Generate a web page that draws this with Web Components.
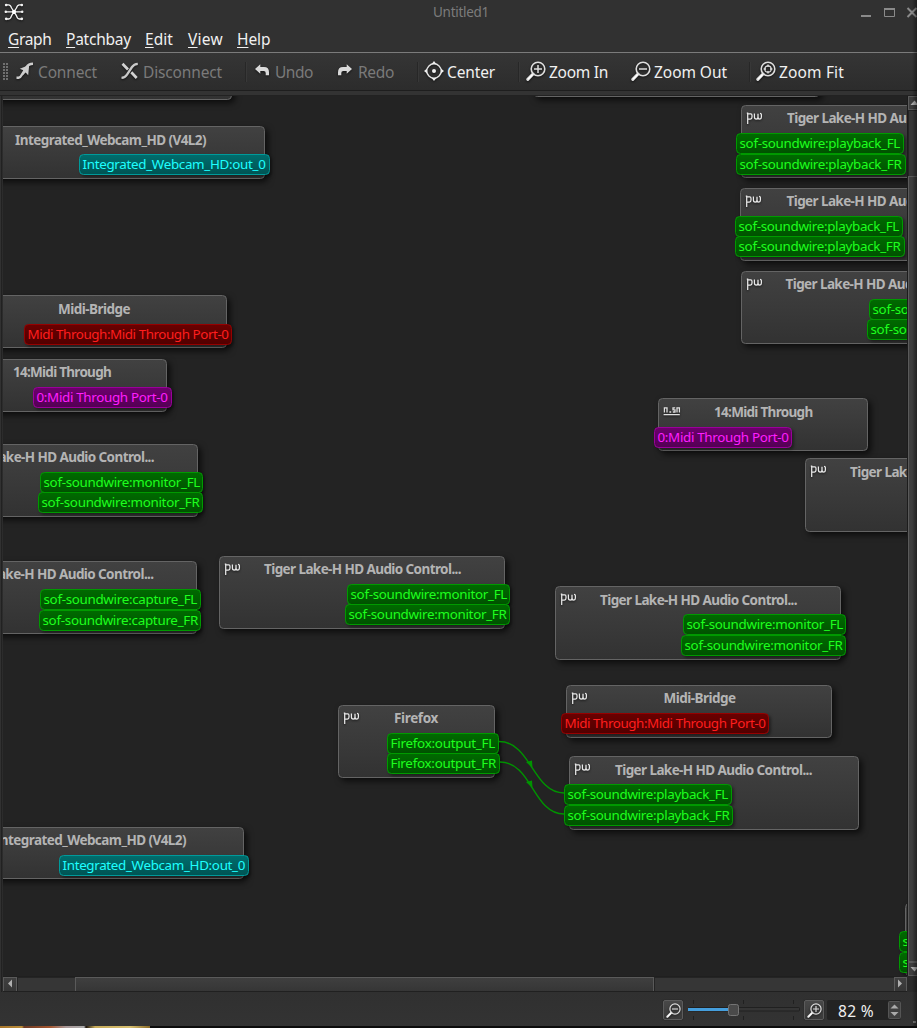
<!DOCTYPE html>
<html lang="en">
<head>
<meta charset="utf-8">
<title>Untitled1</title>
<style>
html,body{margin:0;padding:0;background:#313131}
body{font-family:"Noto Sans",sans-serif;overflow:hidden}
</style>
</head>
<body>
<patch-window></patch-window>
<script>
// Spreads letters so that a label takes exactly the given width.
function fit(el, width) {
  const natural = el.getBoundingClientRect().width;
  el.style.letterSpacing = ((width - natural) / [...el.textContent].length) + 'px';
}
class Base extends HTMLElement {
  connectedCallback() {
    if (this.shadowRoot) return;
    this.attachShadow({mode: 'open'}).innerHTML = this.render();
    this.shadowRoot.querySelectorAll('[data-w]').forEach(e => fit(e, +e.dataset.w));
  }
  a(n) { return this.getAttribute(n) || ''; }
}

const lens = inner => `<g fill="none" stroke="#dedede"><circle cx="12" cy="8" r="6.8" stroke-width="1.6"/><path d="M7 13L1.8 18.4" stroke-width="3" stroke-linecap="round"/><path d="M6.7 13.4L2 18.2" stroke="#fff" stroke-width="1.4"/>${inner}</g>`;
const ICONS = {
  app: ['0 0 20 20', '<g fill="none" stroke="#f2f2f2" stroke-width="1.3" stroke-linecap="round"><path d="M2 9.8H18M2.8 2.8H4.5Q6.8 3 7.6 6L10 9.8L12.4 6Q13.2 3 15.5 2.8H17.2M2.8 17H4.5Q6.8 16.6 7.6 13.6L10 9.8L12.4 13.6Q13.2 16.6 15.5 17H17.2"/><circle cx="2.2" cy="3" r=".7"/><circle cx="17.8" cy="3" r=".7"/><circle cx="1.8" cy="9.8" r=".6"/><circle cx="18.2" cy="9.8" r=".6"/><circle cx="2.2" cy="16.8" r=".7"/><circle cx="17.8" cy="16.8" r=".7"/></g><circle cx="10" cy="9.8" r="2.1" fill="#fff"/>'],
  connect: ['0 0 20 20', '<path d="M1.5 16.8H3.5Q5.5 16.5 7 13.5L11.5 6.2Q13.5 2.8 18 2.8" fill="none" stroke="#cdcdcd" stroke-width="2.4"/><path d="M4.8 7.7L14.2 4L13.2 14.2L10.6 11.4L7.8 14.3L8.3 9.3Z" fill="#cdcdcd"/>'],
  disconnect: ['0 0 20 20', '<path d="M1.5 16.8Q5 16.6 7 13.6L12 6Q14 3 17.8 2.8" fill="none" stroke="#c9c9c9" stroke-width="2.3"/><path d="M2.5 2.8L8 8.5M11.3 11.3L16.7 17" stroke="#d2d2d2" stroke-width="2.7"/>'],
  undo: ['0 0 16 16', '<path d="M1 6L6.3 1.2V4H10Q15 4 15 9.2V12.2H11.7V10Q11.7 8 9.7 8H6.3V10.8Z" fill="#dadada"/>'],
  redo: ['0 0 16 16', '<path d="M15 6L9.7 1.2V4H6Q1 4 1 9.2V12.2H4.3V10Q4.3 8 6.3 8H9.7V10.8Z" fill="#dadada"/>'],
  center: ['0 0 20 20', '<circle cx="10" cy="10" r="7.2" fill="none" stroke="#e2e2e2" stroke-width="1.4"/><circle cx="10" cy="10" r="2" fill="#f2f2f2"/><path d="M10 0L12.4 3H7.6ZM10 20L7.6 17H12.4ZM0 10L3 7.6V12.4ZM20 10L17 12.4V7.6Z" fill="#ededed"/>'],
  zoomin: ['0 0 20 20', lens('<path d="M8 8H16M12 4V12" stroke-width="1.5"/>')],
  zoomout: ['0 0 20 20', lens('<path d="M8 8H16" stroke-width="1.5"/>')],
  zoomfit: ['0 0 20 20', lens('<circle cx="12" cy="8" r="3.2" stroke-width="1.2"/><path d="M12 3.6V6M12 10V12.4M7.6 8H10M14 8H16.4" stroke-width="1.4"/>')],
  pw: ['0 0 18 14', '<g fill="none" stroke="#eaeaea" stroke-width="1.25"><path d="M.8 1.2H1.7V12M1.7 1.8H4.8Q6 1.8 6 3.5V5Q6 7 4.4 7H1.7M8.4 1.5V5Q8.4 7 10.2 7Q12 7 12 5V1.8V5Q12 7 13.8 7Q15.4 7 15.4 5V2.5Q15.3 1.5 14 1.4"/></g>'],
  alsa: ['0 0 18 14', '<g fill="none" stroke="#e0e0e0" stroke-width="1.3"><path d="M1.4 7.5V2.8H4V7.5M6.4 7H8.2M12.2 2.8H10V4.8H12V7H9.8M14 7.5V2.8H16.4V7.5M.6 9.6H16.8"/></g>']
};
customElements.define('ui-icon', class extends Base {
  render() {
    const [box, art] = ICONS[this.a('name')];
    const s = this.a('size') || 20, h = this.a('h') || s;
    return `<style>:host{display:block;flex:none;width:${s}px;height:${h}px}svg{display:block;filter:drop-shadow(0 1px 1px #0009)}</style><svg width="${s}" height="${h}" viewBox="${box}">${art}</svg>`;
  }
});

customElements.define('title-bar', class extends Base {
  render() {
    return `<style>
:host{display:flex;height:24px;align-items:center;justify-content:space-between;box-sizing:border-box;padding:0 0 0 4px;color:#7c7c7c;font-size:13.5px}
.l{width:110px}.t{line-height:24px;white-space:nowrap;margin-left:20px;display:block}
.b{display:block;width:57px;height:24px;margin-left:72px}
</style><div class="l"><ui-icon name="app" size="20"></ui-icon></div><span class="t" data-w="56">Untitled1</span>
<svg class="b" viewBox="0 0 57 24"><path d="M1 16H11" stroke="#8a8a8a" stroke-width="2"/><path d="M24.5 8.5H34.5V16.5H24.5Z" fill="none" stroke="#8a8a8a"/><path d="M24 9H35" stroke="#8a8a8a" stroke-width="2"/><path d="M47.5 8L56.5 17M56.5 8L47.5 17" stroke="#8a8a8a" stroke-width="2"/></svg>`;
  }
});

customElements.define('menu-bar', class extends Base {
  render() {
    const m = [['Graph', 43.5, 14.5], ['Patchbay', 65, 14], ['Edit', 28, 15], ['View', 35, 14], ['Help', 33.5, 0]];
    return `<style>
:host{display:flex;height:28px;box-sizing:border-box;padding-left:8px;color:#f0f0f0;font-size:15.5px;line-height:30px}
span{white-space:nowrap;display:block}div{flex:none}
u{text-underline-offset:2px;text-decoration-thickness:1px;text-decoration-skip-ink:none}
</style>` + m.map(([t, w, g]) => `<div style="width:${w + g}px"><span style="width:max-content" data-w="${w}"><u>${t[0]}</u>${t.slice(1)}</span></div>`).join('');
  }
});

customElements.define('tool-button', class extends Base {
  render() {
    return `<style>
:host{display:flex;flex:none;align-items:center;height:38px;color:#f0f0f0;font-size:15.5px;box-sizing:border-box}
:host([off]){color:#7a7a7a}
.x{width:${this.a('w')}px;margin-left:${this.a('gap') || 3}px}
span{display:block;width:max-content;white-space:nowrap;line-height:38px}
ui-icon{margin-top:-2px}
</style><ui-icon name="${this.a('icon')}" size="${this.a('size') || 20}"></ui-icon><div class="x"><span data-w="${this.a('w')}"><slot></slot>${this.a('label')}</span></div>`;
  }
});

customElements.define('tool-bar', class extends Base {
  render() {
    const b = (ml, icon, label, w, extra = '') => `<tool-button style="margin-left:${ml}px" icon="${icon}" label="${label}" w="${w}" ${extra}></tool-button>`;
    const sep = ml => `<i style="margin-left:${ml}px"></i>`;
    return `<style>
:host{display:flex;height:44px;box-sizing:border-box;border-top:1px solid #7b7b7b;align-items:flex-start;background:linear-gradient(#353535,#2c2c2c 37px,#1e1e1e 37px,#1e1e1e 38px,#333 38px,#333 42px,#222 42px)}
.g{flex:none;width:5px;height:17px;margin:10px 0 0 3px;background:radial-gradient(circle at 1px 1px,#707070 0.9px,transparent 1.1px) 0 0/3px 3px}
i{flex:none;width:1px;height:20px;margin-top:9px;background:#272727;box-shadow:1px 0 #383838}
</style><div class="g"></div>`
    + b(7, 'connect', 'Connect', 59, 'off') + b(23, 'disconnect', 'Disconnect', 79, 'off') + sep(23)
    + b(8, 'undo', 'Undo', 38, 'off size="16" gap="5"') + b(24, 'redo', 'Redo', 36, 'off size="16" gap="5"') + sep(23)
    + b(6, 'center', 'Center', 48) + sep(23) + b(7, 'zoomin', 'Zoom In', 59) + b(23, 'zoomout', 'Zoom Out', 73) + sep(22)
    + b(6, 'zoomfit', 'Zoom Fit', 65);
  }
});

const PORTS = {
  green: ['#006a00', '#005200', '#009a00', '#1eff1e'],
  cyan: ['#006c6c', '#005454', '#009a9a', '#1effff'],
  red: ['#6a0000', '#520000', '#960000', '#ff1e1e'],
  magenta: ['#6c006c', '#540054', '#9a009a', '#ff1eff']
};
customElements.define('node-port', class extends Base {
  render() {
    const [a, b, c, t] = PORTS[this.a('kind')];
    return `<style>
:host{display:block;box-sizing:border-box;height:21px;border:1px solid ${c};border-radius:4.5px;background:linear-gradient(${a},${b});color:${t};font-size:13.4px;padding-left:2.5px;box-shadow:2px 2px 3px #0006}
span{display:block;width:max-content;white-space:nowrap;line-height:19px}
</style><span data-w="${this.a('tw')}">${this.a('label')}</span>`;
  }
});

customElements.define('graph-node', class extends Base {
  render() {
    return `<style>
:host{display:block;box-sizing:border-box;border:1px solid #646464;border-radius:4.5px;background:linear-gradient(#414141,#393939 55%,#323232);box-shadow:3px 3px 6px #000a}
ui-icon{position:absolute;left:4px;top:6px}
h2{position:absolute;margin:0;left:${+this.a('tx') - 1}px;top:${2 + +this.a('ty')}px;font-size:13.5px;line-height:20px;font-weight:700;color:#b4b4b4;white-space:nowrap}
</style>${this.a('icon') ? `<ui-icon name="${this.a('icon')}" size="18" h="14"></ui-icon>` : ''}<h2 data-w="${this.a('tw')}">${this.a('label')}</h2><slot></slot>`;
  }
});

// x, y, width, height, icon, title, title x, title width, port kind, ports [x, y, width, label, text width], title y shift
const TL = 'Tiger Lake-H HD Audio Control...', CAM = 'Integrated_Webcam_HD (V4L2)', MB = 'Midi-Bridge', S = 'sof-soundwire:';
const MT = 'Midi Through:Midi Through Port-0';
const NODES = [
  [-50, 46, 282, 53.5, '', '', 0, 0, 'green', []],
  [533, 24, 287, 73, '', '', 0, 0, 'green', []],
  [-20, 126, 285, 53, '', CAM, 15, 191, 'cyan', [[79, 154, 191, 'Integrated_Webcam_HD:out_0', 183]], 1],
  [-40, 295, 267, 53, '', MB, 58, 72, 'red', [[24, 324, 208, MT, 201]], 1],
  [-43, 359, 210, 53, '', '14:Midi Through', 13, 98, 'magenta', [[33, 387, 139, '0:Midi Through Port-0', 131]]],
  [-88, 444, 286, 73, '', TL, -43, 197, 'green', [[40, 472, 163, S + 'monitor_FL', 156.5], [38, 492, 165, S + 'monitor_FR', 158]]],
  [-88, 561, 285, 73, '', TL, -43.5, 197, 'green', [[40, 589, 161, S + 'capture_FL', 153.5], [39, 610, 162, S + 'capture_FR', 155.5]]],
  [219, 556, 286, 73, 'pw', TL, 264, 197, 'green', [[347, 584, 163, S + 'monitor_FL', 156.5], [345, 604, 165, S + 'monitor_FR', 158]]],
  [555, 586, 286, 73.5, 'pw', TL, 600, 197, 'green', [[683, 614, 163, S + 'monitor_FL', 156.5], [681, 635, 165, S + 'monitor_FR', 158]], 1],
  [566, 685, 266, 53, 'pw', MB, 663.5, 72, 'red', [[561, 713, 208, MT, 201]]],
  [569, 756, 290, 73.5, 'pw', TL, 615, 197, 'green', [[564, 784, 168, S + 'playback_FL', 160.5], [564, 805, 169, S + 'playback_FR', 162]], 1],
  [338, 705, 157, 73, 'pw', 'Firefox', 394, 44, 'green', [[387, 733, 112, 'Firefox:output_FL', 104.5], [387, 753, 113, 'Firefox:output_FR', 105.5]]],
  [741, 105, 290, 73, 'pw', TL, 787, 197, 'green', [[736, 133, 168, S + 'playback_FL', 160.5], [736, 154, 170, S + 'playback_FR', 162]]],
  [740, 188, 290, 73, 'pw', TL, 786.5, 197, 'green', [[735, 216, 168, S + 'playback_FL', 160.5], [735, 236, 170, S + 'playback_FR', 162]]],
  [741, 271, 286, 73, 'pw', TL, 785.5, 197, 'green', [[869, 299, 164, S + 'monitor_FL', 156.5], [867, 319, 165, S + 'monitor_FR', 158]]],
  [658, 398, 210, 53, 'alsa', '14:Midi Through', 714, 98.5, 'magenta', [[654, 427, 138, '0:Midi Through Port-0', 131]], 1],
  [805, 458, 286, 73.5, 'pw', TL, 850, 197, 'green', [], 1],
  [-40, 827, 284, 52, '', CAM, -5, 191, 'cyan', [[59, 855, 190, 'Integrated_Webcam_HD:out_0', 182.5]]],
  [904.5, 903, 286, 73, '', '', 0, 0, 'green', [[899, 931, 168, S + 'playback_FL', 160.5], [899, 951.5, 169, S + 'playback_FR', 162]]]
];
// The scene keeps window coordinates; the view shows the part of it between its scrollbars.
customElements.define('graph-canvas', class extends Base {
  render() {
    return `<style>
:host{display:block;position:relative;overflow:hidden;background:#232323}
.scene{position:absolute;left:-3px;top:-96px;width:1200px;height:1100px}
graph-node,node-port,svg{position:absolute}
svg{left:0;top:0}
</style><div class="scene">` + NODES.map(([x, y, w, h, ic, t, tx, tw, k, ps, ty = 0]) =>
      `<graph-node style="left:${x}px;top:${y}px;width:${w}px;height:${h}px" icon="${ic}" label="${t}" tx="${tx - x}" ty="${ty}" tw="${tw}">`
      + ps.map(p => `<node-port style="left:${p[0] - x - 1}px;top:${p[1] - y - 1}px;width:${p[2]}px" kind="${k}" label="${p[3]}" tw="${p[4]}"></node-port>`).join('')
      + `</graph-node>`).join('')
      + `<svg width="917" height="1000"><g fill="none" stroke="#009400" stroke-width="1.4"><path d="M499 741.5C531 741.5 533 793 564 793"/><path d="M500 762C532 762 533 814 564 814"/></g><path d="M526 762L532 760.5L532.5 768Z M526 782L532 780.5L532.5 788Z" fill="#009400"/></svg></div>`;
  }
});

customElements.define('scroll-bar', class extends Base {
  render() {
    const v = this.hasAttribute('vertical');
    const arrow = d => `<svg width="13" height="13"><path d="${d}" fill="#b0b0b0"/></svg>`;
    return `<style>
:host{display:grid;box-sizing:border-box;background:#363636;overflow:hidden;${v
  ? 'grid-template-rows:14px 66px 786px 14px;grid-template-columns:13px;border-left:1px solid #1c1c1c'
  : 'grid-template-columns:14px 58px 579px 240px 13px;border-top:1px solid #1f1f1f;border-bottom:1px solid #202020'}}
.b,.h{box-sizing:border-box;border:1px solid #5a5a5a;background:linear-gradient(${v ? '90deg,' : ''}#3f3f3f,#363636)}
.t{box-shadow:inset 1px 1px #242424}
svg{display:block}
</style>` + (v
      ? `<div class="b">${arrow('M1.5 8L5.5 3.5L9.5 8Z')}</div><div class="t"></div><div class="h"></div><div class="b">${arrow('M1.5 4L5.5 8.5L9.5 4Z')}</div>`
      : `<div class="b">${arrow('M8 1.5V9.5L4 5.5Z')}</div><div class="t"></div><div class="h"></div><div class="t"></div><div class="b">${arrow('M3 1.5V9.5L7 5.5Z')}</div>`);
  }
});

customElements.define('status-bar', class extends Base {
  render() {
    return `<style>
:host{display:flex;height:34px;box-sizing:border-box;padding:8px 0 0 663px;background:linear-gradient(#303030,#333)}
.b{flex:none;box-sizing:border-box;width:20px;height:20px;border:1px solid #5c5c5c;border-radius:2px;background:linear-gradient(#484848,#3a3a3a);padding:2px 0 0 2px;box-shadow:0 0 1px #111}
.s{flex:none;display:block;width:112px;height:20px;margin:0 4px 0 5px}
.v{display:flex;justify-content:space-between;width:74px;height:20px;margin-left:3px;background:#232323;color:#f0f0f0;font-size:15.5px;line-height:22px;border-radius:2px}
.v span{margin-left:11px;white-space:nowrap;display:block;width:max-content}
.v svg{flex:none;width:13px;height:18px;margin-top:1px}
.z{margin:21px 0 0 12px;width:3px;height:2px;background:#777;flex:none}
</style><div class="b"><ui-icon name="zoomout" size="15"></ui-icon></div>
<svg class="s"><path d="M5.5 0V4M55.5 0V4M105.5 0V4M5.5 16V20M55.5 16V20M105.5 16V20" stroke="#202020"/><rect x=".5" y="7.5" width="111" height="3.5" rx="1" fill="#353535" stroke="#202020"/><rect y="8" width="40" height="3" fill="#459edc"/><rect x="40.5" y="4.5" width="10" height="11" rx="2" fill="#4a4a4a" stroke="#747474"/></svg>
<div class="b"><ui-icon name="zoomin" size="15"></ui-icon></div>
<div class="v"><span data-w="36">82 %</span><svg><rect x=".5" y=".5" width="12" height="17" rx="1" fill="#404040" stroke="#555"/><path d="M2.5 7.5L6.5 3.5L10.5 7.5ZM2.5 11L6.5 15L10.5 11Z" fill="#ababab"/></svg></div><div class="z"></div>`;
  }
});

customElements.define('patch-window', class extends Base {
  render() {
    return `<style>
:host{display:flex;flex-direction:column;position:relative;width:917px;height:1028px;background:#313131;overflow:hidden}
:host>*{flex:none}
.m{display:grid;grid-template:880px 16px / 904px 10px;padding-left:2px;border-left:1px solid #313131;background:linear-gradient(90deg,#1c1c1c 0,#313131 2px,#2a2a2a 100%)}
.f{height:2px;background:linear-gradient(90deg,#a8762c 0,#bb8e3a 22px,#6b3a24 24px,#a5562f 50px,#a99 66px,#aaa 84px,#1a120c 86px,#c7ab5a 95px,#d8c070 130px,#8a6a25 150px,#0c0c0c 150px)}
.e{position:absolute;right:0;top:0;width:5px;height:1026px;background:linear-gradient(90deg,transparent,#0006)}
</style><title-bar></title-bar><menu-bar></menu-bar><tool-bar></tool-bar>
<div class="m"><graph-canvas></graph-canvas><scroll-bar vertical></scroll-bar><scroll-bar></scroll-bar></div>
<status-bar></status-bar><div class="f"></div><div class="e"></div>`;
  }
});
</script>
</body>
</html>
